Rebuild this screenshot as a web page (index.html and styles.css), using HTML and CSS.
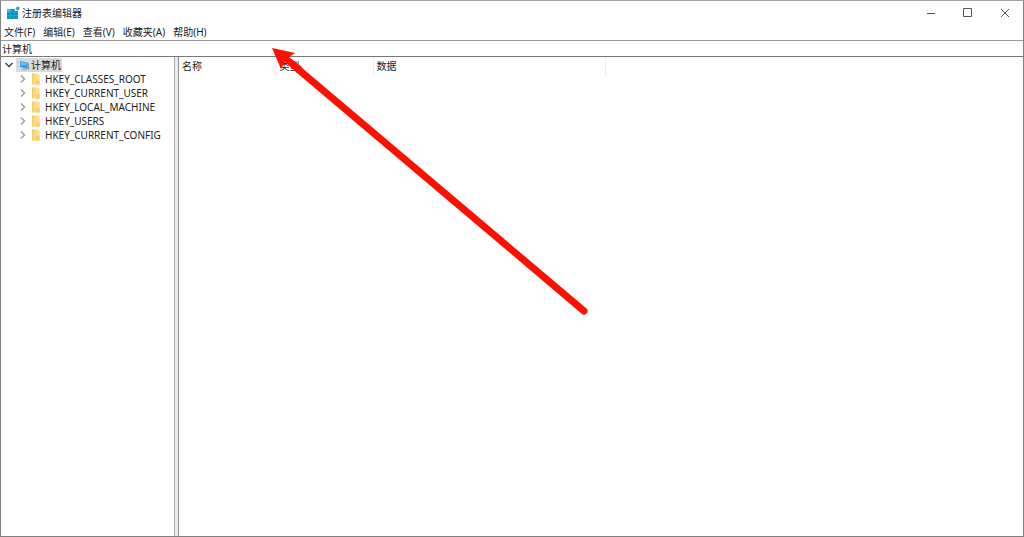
FILE: index.html
```html
<!DOCTYPE html>
<html lang="zh-CN">
<head>
    <meta charset="UTF-8">
    <meta name="viewport" content="width=device-width, initial-scale=1.0">
    <title>注册表编辑器</title>
    <link rel="stylesheet" href="styles.css">
</head>
<body>
    <svg class="symbols" aria-hidden="true">
        <symbol id="chevron" viewBox="0 0 8 8">
            <path d="M2 0.5 L5.5 4 L2 7.5" fill="none" stroke="#a0a0a0" stroke-width="1.5"/>
        </symbol>
        <symbol id="folder" viewBox="0 0 10 12">
            <path d="M1 0.5 H6.5 V7 L8.5 8 V11.5 H1 Z" fill="#fbdc83"/>
            <path d="M6.5 1 H8.5 V11.5 H6.5 Z" fill="#f8d983"/>
            <path d="M5 8 L8.5 7 V11.5 H5 Z" fill="#f6cf68"/>
            <path d="M1 0.5 H2.5 V11.5 H1 Z" fill="#f4cd66"/>
        </symbol>
    </svg>
    <div class="window">
        <header class="titlebar">
            <svg class="app-icon" viewBox="0 0 14 14" aria-hidden="true">
                <path d="M1 3 H9 V5 H12 V13 H1 Z" fill="#0b93c9"/>
                <path d="M1 3 H4.5 V6 H1 Z" fill="#35bde8"/>
                <path d="M5 6.5 H8 V9.5 H5 Z" fill="#0878ad"/>
                <path d="M1 6.2 H12 M1 9.6 H12 M4.7 3 V13 M8.3 3 V13" stroke="#35b5df" stroke-width="0.6"/>
                <path d="M11.4 0.3 L13.7 1.5 L13.2 4 L11 4.4 L9.4 2.6 Z" fill="#27abd8"/>
            </svg>
            <h1>注册表编辑器</h1>
            <div class="controls">
                <button type="button" aria-label="最小化">
                    <svg viewBox="0 0 10 10"><path d="M1 5.5 H9" /></svg>
                </button>
                <button type="button" aria-label="最大化">
                    <svg viewBox="0 0 10 10"><path d="M0.5 0.5 H8.5 V8.5 H0.5 Z" /></svg>
                </button>
                <button type="button" aria-label="关闭">
                    <svg viewBox="0 0 10 10"><path d="M1 1 L9 9 M9 1 L1 9" /></svg>
                </button>
            </div>
        </header>
        <nav class="menu">
            <button type="button">文件(F)</button>
            <button type="button">编辑(E)</button>
            <button type="button">查看(V)</button>
            <button type="button">收藏夹(A)</button>
            <button type="button">帮助(H)</button>
        </nav>
        <input class="address" type="text" value="计算机" aria-label="地址">
        <main class="panes">
            <div class="tree">
                <button type="button" class="node root">
                    <svg class="arrow" viewBox="0 0 8 8"><path d="M0.5 2 L4 5.5 L7.5 2" fill="none" stroke="#404040" stroke-width="1.5"/></svg>
                    <span class="selected">
                        <svg class="computer" viewBox="0 0 11 11">
                            <path d="M1 1 L8 2.5 V9 L1 7 Z" fill="#2c9fe0"/>
                            <path d="M1.5 1.7 L7.4 3 V5 L1.5 5.5 Z" fill="#62c4f3"/>
                            <path d="M8 2.5 L10 3.3 V10 L8 9 Z" fill="#8c9ba6"/>
                            <path d="M3 8.5 L8 10 L6 10.5 L2 9.3 Z" fill="#9cabb5"/>
                        </svg>
                        计算机
                    </span>
                </button>
                <ul>
                    <li><button type="button" class="node"><svg class="arrow"><use href="#chevron"/></svg><svg class="folder"><use href="#folder"/></svg>HKEY_CLASSES_ROOT</button></li>
                    <li><button type="button" class="node"><svg class="arrow"><use href="#chevron"/></svg><svg class="folder"><use href="#folder"/></svg>HKEY_CURRENT_USER</button></li>
                    <li><button type="button" class="node"><svg class="arrow"><use href="#chevron"/></svg><svg class="folder"><use href="#folder"/></svg>HKEY_LOCAL_MACHINE</button></li>
                    <li><button type="button" class="node"><svg class="arrow"><use href="#chevron"/></svg><svg class="folder"><use href="#folder"/></svg>HKEY_USERS</button></li>
                    <li><button type="button" class="node"><svg class="arrow"><use href="#chevron"/></svg><svg class="folder"><use href="#folder"/></svg>HKEY_CURRENT_CONFIG</button></li>
                </ul>
            </div>
            <div class="splitter"></div>
            <div class="values">
                <table>
                    <thead>
                        <tr>
                            <th class="name" scope="col">名称</th>
                            <th class="type" scope="col">类型</th>
                            <th class="data" scope="col">数据</th>
                        </tr>
                    </thead>
                </table>
            </div>
        </main>
        <!-- arrow pointing at the address bar -->
        <svg class="pointer" viewBox="0 0 320 272" aria-hidden="true">
            <path d="M27 22 L312 263" stroke="#fc1100" stroke-width="7" stroke-linecap="round"/>
            <path d="M0 0 L23 5 L17 9 L30 19 L25 25 L13 14 L9 21 Z" fill="#fc1100"/>
        </svg>
    </div>
</body>
</html>
```
FILE: styles.css
```css
*{
    box-sizing: border-box;
}
body{
    margin: 0;
    background-color: #fff;
    color: #222;
    font-family: "Noto Sans", "Noto Sans CJK SC", sans-serif;
    font-size: 10px;
    line-height: 14px;
}
button, input{
    margin: 0;
    padding: 0;
    border: 0;
    background: none;
    color: inherit;
    font: inherit;
}
svg{
    display: block;
    flex: none;
}
.symbols{
    position: absolute;
    width: 0;
    height: 0;
}
.window{
    position: relative;
    display: flex;
    flex-direction: column;
    min-height: 100vh;
    border: 1px solid #808080;
    border-top-color: #a0a0a0;
}
.titlebar{
    display: flex;
    align-items: center;
    height: 23px;
    padding-left: 5px;
}
.app-icon{
    width: 14px;
    height: 14px;
}
.titlebar h1{
    margin: 0 0 0 2px;
    font-size: 10px;
    font-weight: normal;
}
.controls{
    display: flex;
    margin-left: auto;
}
.controls button{
    display: flex;
    align-items: center;
    justify-content: center;
    width: 37px;
    height: 23px;
}
.controls svg{
    width: 10px;
    height: 10px;
    fill: none;
    stroke: #555;
}
.menu{
    display: flex;
    gap: 8px;
    height: 16px;
    padding-left: 3px;
}
.address{
    width: 100%;
    height: 17px;
    padding-left: 1px;
    border-top: 1px solid #9a9a9a;
    border-bottom: 1px solid #777;
}
.panes{
    display: flex;
    flex: 1;
}
.tree{
    width: 173px;
    padding-top: 1px;
}
.tree ul{
    margin: 0;
    padding: 0 0 0 14px;
    list-style: none;
}
.node{
    display: flex;
    align-items: center;
    height: 14px;
    padding-left: 4px;
    white-space: nowrap;
}
.arrow{
    width: 8px;
    height: 8px;
}
.folder{
    width: 10px;
    height: 12px;
    margin: 0 4px;
}
.selected{
    display: flex;
    align-items: center;
    gap: 1px;
    height: 14px;
    margin-left: 3px;
    padding: 0 1px 0 3px;
    background-color: #d9d9d9;
}
.computer{
    width: 11px;
    height: 11px;
}
.splitter{
    width: 5px;
    border-left: 1px solid #b0b0b0;
    border-right: 1px solid #8c8c8c;
    background-color: #ececec;
}
.values{
    flex: 1;
}
table{
    border-collapse: collapse;
    table-layout: fixed;
    width: 427px;
}
th{
    height: 18px;
    padding: 0 3px;
    border-right: 1px solid #eee;
    font-weight: normal;
    text-align: left;
}
.name, .type{
    width: 97px;
}
.pointer{
    position: absolute;
    top: 47px;
    left: 271px;
    width: 320px;
    height: 272px;
    pointer-events: none;
}
```
